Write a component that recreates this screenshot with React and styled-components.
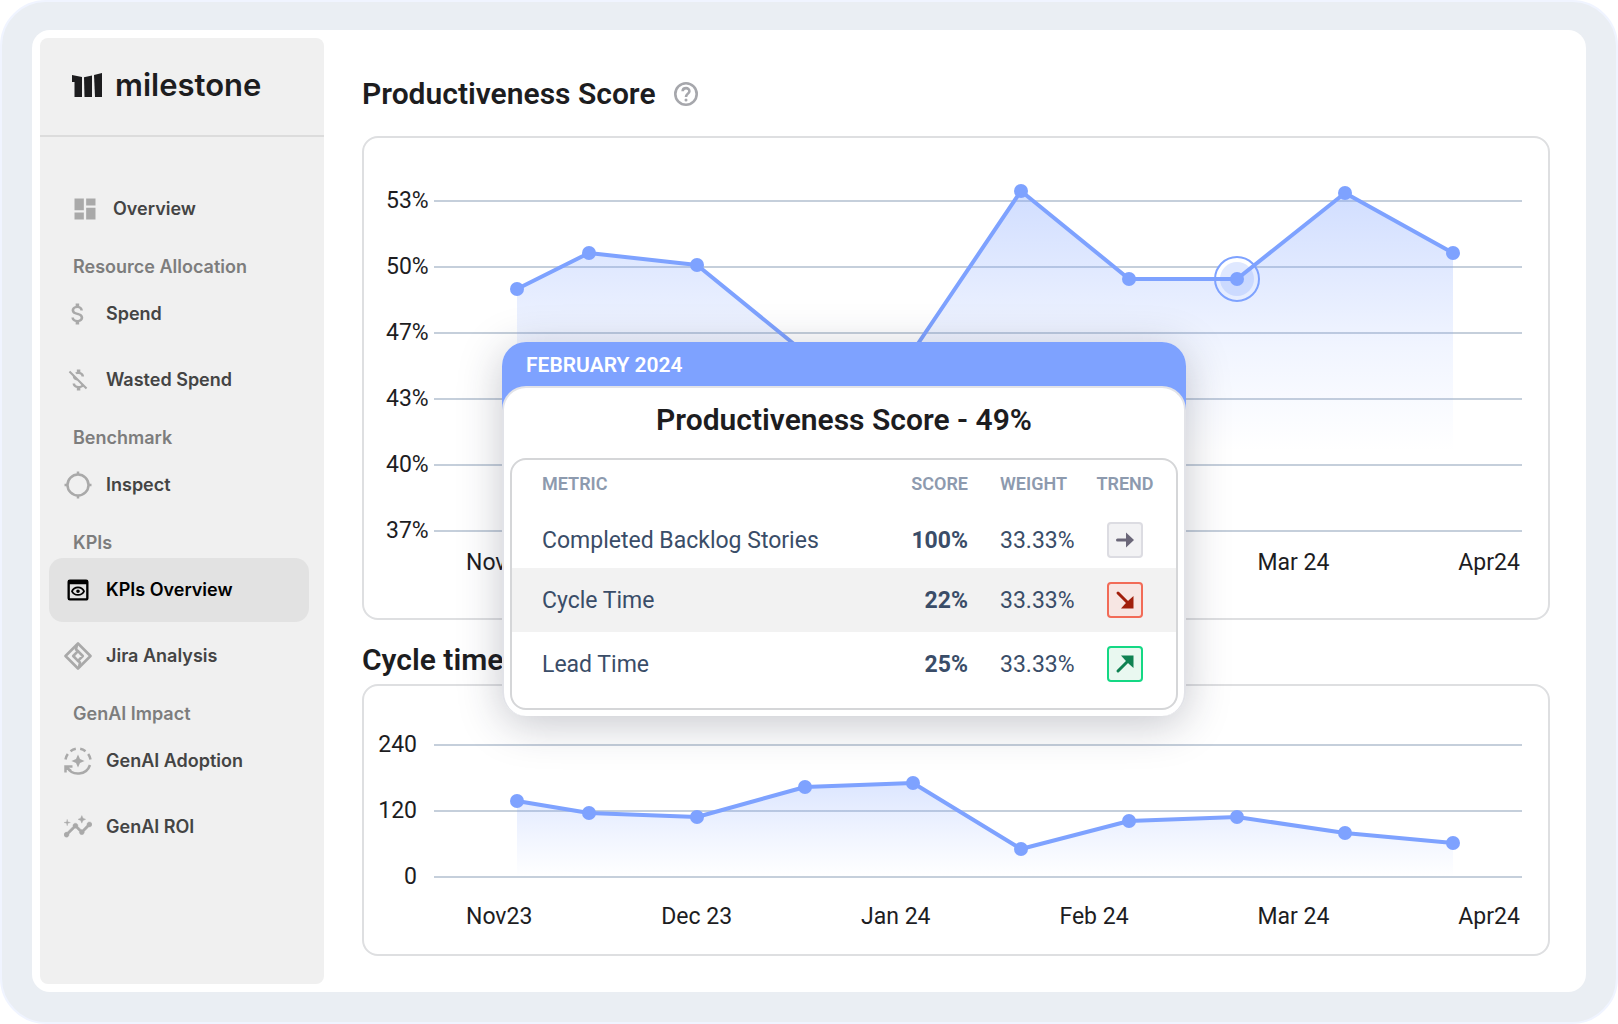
import React from "react";
import styled, { createGlobalStyle, css } from "styled-components";
import { MdDashboard, MdAttachMoney, MdMoneyOff, MdOutlinePreview, MdInsights } from "react-icons/md";

const GlobalStyle = createGlobalStyle`
  *, *::before, *::after { box-sizing: border-box; }
  body { margin: 0; background: #fff; color: #1d1d1f; font-family: Roboto, "Liberation Sans", sans-serif; }
`;

const Frame = styled.div`
  padding: 28px 30px 30px;
  border: 2px solid #f0f4ff;
  border-radius: 46px;
  background: #eaeef3;
`;

const Panel = styled.div`
  display: flex;
  padding: 8px;
  border-radius: 18px;
  background: #fff;
`;

const Sidebar = styled.aside`
  flex: 0 0 284px;
  border-radius: 8px;
  background: #f0f0f0;
  font-family: Inter, "Liberation Sans", sans-serif;
`;

const Brand = styled.a`
  display: flex;
  align-items: center;
  gap: 12px;
  height: 99px;
  padding: 0 32px 4px;
  border-bottom: 2px solid #dcdcdc;
  color: #1d1d1f;
  font-size: 31px;
  font-weight: 600;
  line-height: 40px;
  text-decoration: none;
`;

const Nav = styled.nav`
  padding: 40px 15px 0 9px;
`;

const NavGroup = styled.section``;

const NavHeading = styled.h2`
  margin: 15px 0 4px;
  padding-left: 24px;
  color: #7d7d7d;
  font-size: 18px;
  font-weight: 600;
  line-height: 22px;
`;

const NavList = styled.ul`
  display: grid;
  gap: 2px;
  margin: 0;
  padding: 0;
  list-style: none;
`;

const NavLink = styled.a`
  display: flex;
  align-items: center;
  gap: 14px;
  height: 64px;
  padding-left: ${(p) => (p.$inset ? 22 : 15)}px;
  border-radius: 14px;
  color: #444;
  font-size: 18px;
  font-weight: 600;
  line-height: 24px;
  text-decoration: none;
  svg { flex: none; width: 28px; height: 28px; color: #a9a9a9; }
  ${(p) =>
    p.$active &&
    css`
      background: #e2e2e2;
      color: #000;
      svg { color: #000; }
    `}
`;

const Main = styled.main`
  position: relative;
  flex: 1;
  min-width: 0;
  padding: 38px 28px 28px 38px;
`;

const SectionTitle = styled.h1`
  display: flex;
  align-items: center;
  gap: 18px;
  margin: ${(p) => (p.$tight ? "22px 0 6px" : "0 0 24px")};
  font-size: 30px;
  font-weight: 600;
  line-height: 36px;
`;

const HelpButton = styled.button`
  display: flex;
  padding: 0;
  border: 0;
  background: none;
  color: #a6a7ac;
  svg { width: 24px; height: 24px; }
`;

const ChartCard = styled.figure`
  margin: 0;
  padding: ${(p) => (p.$short ? "46px 28px 24px 10px" : "50px 28px 42px 22px")};
  border: 2px solid #dedfe1;
  border-radius: 16px;
  font-size: 23px;
  line-height: 26px;
`;

const ChartBody = styled.div`
  display: flex;
  margin-right: -2px;
`;

const YAxis = styled.ol`
  display: flex;
  flex: none;
  flex-direction: column;
  gap: 40px;
  width: ${(p) => (p.$right ? 60 : 48)}px;
  margin: 0;
  padding: 0 ${(p) => (p.$right ? 17 : 0)}px 0 0;
  list-style: none;
  text-align: ${(p) => (p.$right ? "right" : "left")};
`;

const Plot = styled.svg`
  flex: 1;
  min-width: 0;
  height: ${(p) => p.$height}px;
  overflow: visible;
`;

const XAxis = styled.ol`
  display: flex;
  justify-content: space-between;
  margin: ${(p) => (p.$short ? 14 : 6)}px 0 0;
  padding: 0 0 0 ${(p) => (p.$short ? 92 : 80)}px;
  list-style: none;
`;

const Tooltip = styled.section`
  position: absolute;
  top: 304px;
  left: 178px;
  width: 684px;
  border-radius: 24px;
  background: linear-gradient(#7ea2ff 90px, #e6e7eb 90px);
  box-shadow: 0 8px 44px rgba(35, 40, 60, 0.26);
`;

const TooltipDate = styled.header`
  height: 44px;
  padding: 10px 24px;
  color: #fff;
  font-size: 21px;
  font-weight: 600;
  line-height: 26px;
`;

const TooltipBody = styled.div`
  padding: 14px 6px 6px;
  border: 2px solid #e2e3e8;
  border-bottom-width: 0;
  border-radius: 24px;
  background: #fff;
`;

const TooltipTitle = styled.h2`
  margin: 0 0 20px;
  font-size: 30px;
  font-weight: 600;
  line-height: 36px;
  text-align: center;
`;

const TableFrame = styled.div`
  padding-bottom: 12px;
  border: 2px solid #d5d6d8;
  border-radius: 16px;
`;

const MetricTable = styled.table`
  width: 100%;
  border-collapse: collapse;
  table-layout: fixed;
  color: #3a4d68;
  font-size: 23px;
  line-height: 26px;
`;

const Col = styled.col`
  width: ${(p) => p.$width}px;
`;

const HeadCell = styled.th`
  height: 52px;
  padding: 0 0 4px ${(p) => p.$pad || 0}px;
  color: #8d9aae;
  font-size: 18px;
  font-weight: 600;
  line-height: 22px;
  text-align: ${(p) => p.$align || "left"};
`;

const Row = styled.tr`
  height: ${(p) => (p.$first ? 56 : 64)}px;
  background: ${(p) => (p.$shaded ? "#f2f2f2" : "none")};
`;

const Cell = styled.td`
  padding: ${(p) => (p.$align === "center" ? 0 : 2)}px 0 0 ${(p) => p.$pad || 0}px;
  font-weight: ${(p) => (p.$bold ? 700 : 400)};
  text-align: ${(p) => p.$align || "left"};
`;

const trendColors = {
  flat: ["#f2f2f4", "#dcdce2", "#6b6779"],
  down: ["#f7e6e3", "#f26b57", "#a11f0c"],
  up: ["#e9f8f0", "#14d884", "#0f8252"],
};

const TrendBadge = styled.span`
  display: inline-flex;
  align-items: center;
  justify-content: center;
  width: 36px;
  height: 36px;
  border: 2px solid ${(p) => trendColors[p.$trend][1]};
  border-radius: 4px;
  background: ${(p) => trendColors[p.$trend][0]};
  color: ${(p) => trendColors[p.$trend][2]};
  vertical-align: middle;
`;

const Logo = () => (
  <svg width="31" height="24" viewBox="0 0 31 24" fill="currentColor" aria-hidden="true">
    <path d="M0 2L10 4V24H2.500V9H0Z" />
    <path d="M12 4.300L20 2.500V24H12.500Z" />
    <path d="M22 2L30 0V24H23Z" />
  </svg>
);

const InspectIcon = () => (
  <svg viewBox="0 0 28 28" fill="none" stroke="currentColor" strokeWidth="2.500">
    <circle cx="14" cy="14" r="10.500" />
    <path d="M14 .5V4M14 24v3.500M.5 14H4M24 14h3.500" />
  </svg>
);

const JiraIcon = () => (
  <svg viewBox="0 0 28 28" fill="none" stroke="currentColor" strokeWidth="2.600" strokeLinejoin="round">
    <path d="M14 1.500L26.500 14L14 26.500L1.500 14Z" />
    <path d="M14 9.200L18.800 14L14 18.800L9.200 14Z" />
    <path d="M13 2.500L12 7.500L14.500 9.500M15 25.500L16 20.500L13.500 18.500" />
  </svg>
);

const AdoptionIcon = () => (
  <svg viewBox="0 0 28 28" fill="none" stroke="currentColor" strokeWidth="2.500">
    <path d="M1.500 12.500A12.600 12.600 0 0 1 3.800 7M6.500 4.200A12.600 12.600 0 0 1 11.800 1.700M16.200 1.700A12.600 12.600 0 0 1 21.500 4.200M24.200 7A12.600 12.600 0 0 1 26.500 12.500" />
    <path d="M26 18A12.600 12.600 0 0 1 3 20M1.500 25.500V19.500H8.500M2 20L7 24" />
    <path d="M14 7.500L16 12L20.500 14L16 16L14 20.500L12 16L7.500 14L12 12Z" fill="currentColor" stroke="none" />
  </svg>
);

const RoiIcon = () => <MdInsights viewBox="1 1 22 22" stroke="currentColor" strokeWidth="0.300" />;

const HelpIcon = () => (
  <svg viewBox="0 0 24 24" fill="none" stroke="currentColor" strokeWidth="2.600">
    <circle cx="12" cy="12" r="10.700" />
    <path d="M8.600 9.300C8.800 5 15.500 5.200 15.400 9.200C15.300 11.600 12 11.800 12 15" />
    <circle cx="12" cy="18" r="1.500" fill="currentColor" stroke="none" />
  </svg>
);

const trendShapes = {
  flat: { tail: "M3.500 11H13", head: "M12 3.500L20 11L12 18.500Z" },
  down: { tail: "M4 4L14 14", head: "M19.500 7V19.500H7L11 15L15 11Z" },
  up: { tail: "M4 18L14 8", head: "M7 2.500H19.500V15L15 11L11 7Z" },
};

const TrendIcon = ({ trend }) => (
  <svg width="22" height="22" viewBox="0 0 22 22" role="img" aria-label={trend}>
    <path d={trendShapes[trend].tail} stroke="currentColor" strokeWidth="3" strokeLinecap="round" />
    <path d={trendShapes[trend].head} fill="currentColor" />
  </svg>
);

const navGroups = [
  { links: [{ label: "Overview", icon: MdDashboard, inset: true }] },
  {
    title: "Resource Allocation",
    links: [
      { label: "Spend", icon: MdAttachMoney },
      { label: "Wasted Spend", icon: MdMoneyOff },
    ],
  },
  { title: "Benchmark", links: [{ label: "Inspect", icon: InspectIcon }] },
  {
    title: "KPIs",
    links: [
      { label: "KPIs Overview", icon: MdOutlinePreview, active: true },
      { label: "Jira Analysis", icon: JiraIcon },
    ],
  },
  {
    title: "GenAI Impact",
    links: [
      { label: "GenAI Adoption", icon: AdoptionIcon },
      { label: "GenAI ROI", icon: RoiIcon },
    ],
  },
];

const months = ["Nov23", "Dec 23", "Jan 24", "Feb 24", "Mar 24", "Apr24"];
const PLOT_WIDTH = 1088;
const xs = [83, 155, 263, 371, 479, 587, 695, 803, 911, 1019];
const percent = (x) => `${(x / PLOT_WIDTH) * 100}%`;

const metrics = [
  { name: "Completed Backlog Stories", score: "100%", weight: "33.33%", trend: "flat" },
  { name: "Cycle Time", score: "22%", weight: "33.33%", trend: "down" },
  { name: "Lead Time", score: "25%", weight: "33.33%", trend: "up" },
];

function AreaChart({ id, label, ticks, values, peak, selected, short }) {
  const height = ticks.length * 66 - 40;
  const base = height - 13;
  const points = xs.map((x, i) => `${x},${values[i]}`).join(" ");
  return (
    <ChartCard $short={short} aria-label={label}>
      <ChartBody>
        <YAxis $right={short}>
          {ticks.map((t) => (
            <li key={t}>{t}</li>
          ))}
        </YAxis>
        <Plot $height={height} aria-hidden="true">
          <defs>
            <linearGradient id={id} gradientUnits="userSpaceOnUse" x1="0" x2="0" y1={peak} y2={short ? base : base - 80}>
              <stop offset="0" stopColor="#7ea2ff" stopOpacity={short ? 0.27 : 0.36} />
              <stop offset="0.600" stopColor="#7ea2ff" stopOpacity={short ? 0.1 : 0.11} />
              <stop offset="1" stopColor="#7ea2ff" stopOpacity="0" />
            </linearGradient>
          </defs>
          {ticks.map((t, i) => (
            <line key={t} x1="0" x2="100%" y1={13 + i * 66} y2={13 + i * 66} stroke="#c5cfdb" strokeWidth="2" />
          ))}
          {selected !== undefined && (
            <circle cx={percent(xs[selected])} cy={values[selected]} r="21" fill="#fff" />
          )}
          <svg width="100%" height={height} viewBox={`0 0 ${PLOT_WIDTH} ${height}`} preserveAspectRatio="none" overflow="visible">
            <polygon points={`${xs[0]},${base} ${points} ${xs[9]},${base}`} fill={`url(#${id})`} />
            <polyline points={points} fill="none" stroke="#7ea2ff" strokeWidth="4" strokeLinejoin="round" vectorEffect="non-scaling-stroke" />
          </svg>
          {selected !== undefined && (
            <>
              <circle cx={percent(xs[selected])} cy={values[selected]} r="22" fill="none" stroke="#7ea2ff" strokeWidth="2" />
              <circle cx={percent(xs[selected])} cy={values[selected]} r="17" fill="#7ea2ff" fillOpacity="0.25" />
            </>
          )}
          {xs.map((x, i) => (
            <circle key={x} cx={percent(x)} cy={values[i]} r="7" fill="#7ea2ff" />
          ))}
        </Plot>
      </ChartBody>
      <XAxis $short={short}>
        {months.map((m) => (
          <li key={m}>{m}</li>
        ))}
      </XAxis>
    </ChartCard>
  );
}

function ScoreTooltip() {
  return (
    <Tooltip>
      <TooltipDate>FEBRUARY 2024</TooltipDate>
      <TooltipBody>
        <TooltipTitle>Productiveness Score - 49%</TooltipTitle>
        <TableFrame>
          <MetricTable>
            <colgroup>
              <Col />
              <Col $width={120} />
              <Col $width={106} />
              <Col $width={102} />
            </colgroup>
            <thead>
              <tr>
                <HeadCell $pad={30}>METRIC</HeadCell>
                <HeadCell $align="right">SCORE</HeadCell>
                <HeadCell $pad={32}>WEIGHT</HeadCell>
                <HeadCell $align="center">TREND</HeadCell>
              </tr>
            </thead>
            <tbody>
              {metrics.map((m, i) => (
                <Row key={m.name} $first={i === 0} $shaded={i === 1}>
                  <Cell $pad={30}>{m.name}</Cell>
                  <Cell $bold $align="right">{m.score}</Cell>
                  <Cell $pad={32}>{m.weight}</Cell>
                  <Cell $align="center">
                    <TrendBadge $trend={m.trend}>
                      <TrendIcon trend={m.trend} />
                    </TrendBadge>
                  </Cell>
                </Row>
              ))}
            </tbody>
          </MetricTable>
        </TableFrame>
      </TooltipBody>
    </Tooltip>
  );
}

export default function App() {
  return (
    <>
      <GlobalStyle />
      <Frame>
        <Panel>
          <Sidebar>
            <Brand href="#home">
              <Logo />
              milestone
            </Brand>
            <Nav>
              {navGroups.map((group, i) => (
                <NavGroup key={i}>
                  {group.title && <NavHeading>{group.title}</NavHeading>}
                  <NavList>
                    {group.links.map(({ label, icon: Icon, inset, active }) => (
                      <li key={label}>
                        <NavLink href="#page" $inset={inset} $active={active} aria-current={active ? "page" : undefined}>
                          <Icon />
                          {label}
                        </NavLink>
                      </li>
                    ))}
                  </NavList>
                </NavGroup>
              ))}
            </Nav>
          </Sidebar>
          <Main>
            <SectionTitle>
              Productiveness Score
              <HelpButton type="button" aria-label="Help">
                <HelpIcon />
              </HelpButton>
            </SectionTitle>
            <AreaChart
              id="score-fill"
              label="Productiveness Score"
              ticks={["53%", "50%", "47%", "43%", "40%", "37%"]}
              values={[101, 65, 77, 165, 163, 3, 91, 91, 5, 65]}
              peak={3}
              selected={7}
            />
            <SectionTitle as="h2" $tight>Cycle time</SectionTitle>
            <AreaChart
              short
              id="cycle-fill"
              label="Cycle time"
              ticks={["240", "120", "0"]}
              values={[69, 81, 85, 55, 51, 117, 89, 85, 101, 111]}
              peak={51}
            />
            <ScoreTooltip />
          </Main>
        </Panel>
      </Frame>
    </>
  );
}
